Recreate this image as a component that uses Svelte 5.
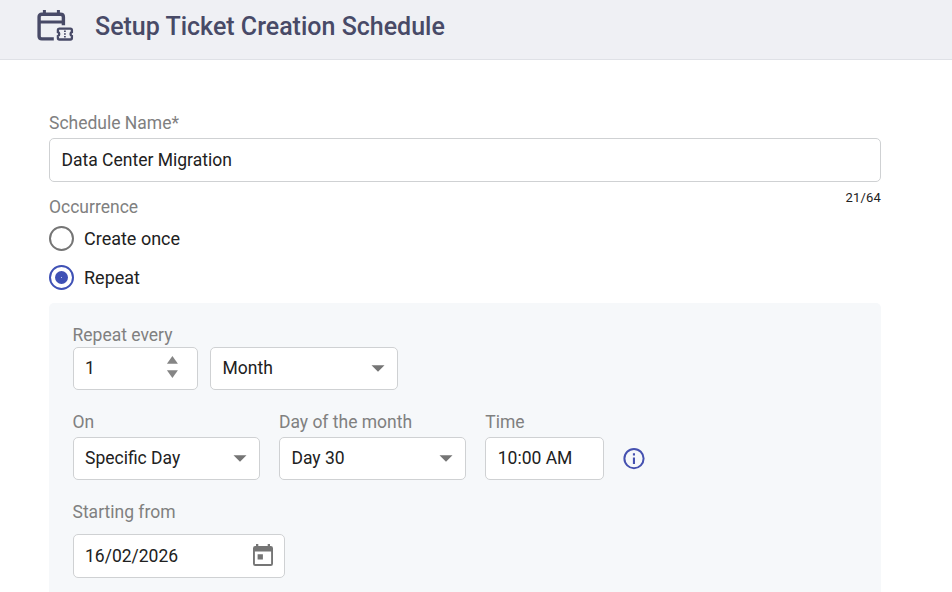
<script lang="ts">
	type Occurrence = "once" | "repeat";

	const NAME_MAX = 64;
	const OPTIONS: { id: Occurrence; label: string }[] = [
		{ id: "once", label: "Create once" },
		{ id: "repeat", label: "Repeat" },
	];

	let name = $state("Data Center Migration");
	let occurrence = $state<Occurrence>("repeat");
	let interval = $state(1);

	const step = (by: number) => (interval = Math.max(1, interval + by));
</script>

{#snippet select(value: string)}
	<button class="field select">
		<span>{value}</span>
		<svg class="caret" width="14" height="7" viewBox="0 0 14 7"><path d="M0.5 0.3h13L7 6.8z" /></svg>
	</button>
{/snippet}

<header>
	<svg class="logo" width="38" height="32" viewBox="0 0 38 32" fill="none" stroke="currentColor">
		<path d="M8.4 0v5M22.4 0v5" stroke-width="3" />
		<path d="M17.8 28.9H5.8Q3.1 28.9 3.1 26.3V6.8Q3.1 4.3 5.8 4.3H24.4Q27.4 4.3 27.4 7V15.3" stroke-width="3.4" />
		<path d="M3 12H27.4" stroke-width="3" />
		<path d="M23 18.6H34.4Q35.9 18.6 35.9 20.1V22.2A2 2 0 0 0 35.9 26V28Q35.9 29.5 34.4 29.5H23.4Q21.9 29.5 21.9 28V26A2 2 0 0 0 21.9 22.2V20.1Q21.9 18.6 23.4 18.6" stroke-width="2.3" />
		<path d="M28.9 20.4v7.2" stroke-width="1.8" stroke-dasharray="1.7 1.05" />
	</svg>
	<h1>Setup Ticket Creation Schedule</h1>
</header>

<main>
	<div class="label">Schedule Name*</div>
	<div class="field name" role="textbox" tabindex="0" contenteditable="true" bind:textContent={name}></div>

	<div class="under">
		<div class="label">Occurrence</div>
		<div class="count">{name.length}/{NAME_MAX}</div>
	</div>

	<div class="options" role="radiogroup">
		{#each OPTIONS as o (o.id)}
			<button class="option" role="radio" aria-checked={occurrence === o.id} onclick={() => (occurrence = o.id)}>
				<span class="dot" class:on={occurrence === o.id}></span>
				{o.label}
			</button>
		{/each}
	</div>

	{#if occurrence === "repeat"}
		<section>
			<div class="label">Repeat every</div>
			<div class="row every">
				<div class="field interval">
					<span>{interval}</span>
					<div class="steps">
						<button aria-label="Increase" onclick={() => step(1)}>
							<svg width="12" height="8" viewBox="0 0 12 8"><path d="M6.4 0L11.9 7.8H0.9z" /></svg>
						</button>
						<button aria-label="Decrease" onclick={() => step(-1)}>
							<svg width="12" height="8" viewBox="0 0 12 8"><path d="M6.4 8L11.9 0.2H0.9z" /></svg>
						</button>
					</div>
				</div>
				<div class="month">{@render select("Month")}</div>
			</div>

			<div class="row when">
				<div class="col">
					<div class="label">On</div>
					{@render select("Specific Day")}
				</div>
				<div class="col">
					<div class="label">Day of the month</div>
					{@render select("Day 30")}
				</div>
				<div class="col time">
					<div class="label">Time</div>
					<div class="field">10:00 AM</div>
				</div>
				<svg class="info" width="22" height="22" viewBox="0 0 22 22">
					<circle cx="11" cy="10.6" r="9.6" fill="none" stroke="currentColor" stroke-width="2" />
					<path d="M9.9 5.3h2.1v2.1h-2.1zM9.9 9.4h2.1v6.5h-2.1z" fill="currentColor" />
				</svg>
			</div>

			<div class="start">
				<div class="label">Starting from</div>
				<div class="field date">
					<span>16/02/2026</span>
					<svg width="20" height="22" viewBox="0 0 20 22">
						<path fill-rule="evenodd" d="M3 0h2.3v2.1h9.4V0H17v2.1h.8A2.2 2.2 0 0 1 20 4.3v15.4a2.2 2.2 0 0 1-2.2 2.2H2.2A2.2 2.2 0 0 1 0 19.7V4.3a2.2 2.2 0 0 1 2.2-2.2H3zM1.9 7.6v12.3h16.2V7.6zM4.6 10.2h5.3v5.2H4.6z" />
					</svg>
				</div>
			</div>
		</section>
	{/if}
</main>

<style>
	:global(body) {
		margin: 0;
		background: #fff;
		color: #212121;
		font-family: Roboto, "Liberation Sans", sans-serif;
		font-size: 18px;
	}
	header {
		display: flex;
		align-items: flex-start;
		box-sizing: border-box;
		height: 60px;
		padding: 10px 0 0 36px;
		background: #eff0f4;
		border-bottom: 1px solid #dfe1e6;
		color: #484a67;
	}
	h1 {
		margin: 1px 0 0 21px;
		font-size: 25px;
		font-weight: 500;
		line-height: 32px;
	}
	main {
		width: 832px;
		padding: 53px 0 0 49px;
	}
	button {
		font: inherit;
		color: inherit;
		background: none;
		border: 0;
		padding: 0;
		text-align: left;
	}
	.label {
		font-size: 17.5px;
		line-height: 20px;
		color: #808080;
	}
	.field {
		display: flex;
		align-items: center;
		box-sizing: border-box;
		width: 100%;
		height: 43px;
		padding: 0 12px 1px 11.5px;
		background: #fff;
		border: 1px solid #cfd1d3;
		border-radius: 5px;
		font-size: 17.5px;
		white-space: nowrap;
	}
	.name {
		height: 44px;
		margin-top: 5px;
	}
	.under {
		display: flex;
		justify-content: space-between;
		padding-top: 15px;
	}
	.count {
		margin-top: -7px;
		font-size: 13px;
		line-height: 16px;
		letter-spacing: 0.2px;
	}
	.options {
		display: flex;
		flex-direction: column;
		align-items: flex-start;
		gap: 14px;
		padding: 9px 0 13px;
	}
	.option {
		display: flex;
		align-items: center;
		gap: 10px;
		height: 25px;
	}
	.dot {
		display: flex;
		align-items: center;
		justify-content: center;
		box-sizing: border-box;
		width: 25px;
		height: 25px;
		border: 2px solid #757575;
		border-radius: 50%;
	}
	.dot.on {
		border-color: #3f51b5;
	}
	.dot.on::after {
		content: "";
		width: 13px;
		height: 13px;
		border-radius: 50%;
		background: radial-gradient(circle, #bcc3ee 0.5px, #3f51b5 1px);
	}
	section {
		box-sizing: border-box;
		height: 289px;
		padding: 22px 24px 0 23.5px;
		border-radius: 5px 5px 0 0;
		background: #f6f8fa;
	}
	.row {
		display: flex;
	}
	.every {
		gap: 12.5px;
		margin-top: 2px;
	}
	section .field {
		padding-bottom: 2px;
	}
	.interval {
		width: 125px;
		justify-content: space-between;
		padding-right: 18.5px;
	}
	.month {
		width: 187.5px;
	}
	.steps {
		display: flex;
		flex-direction: column;
		gap: 6px;
		margin-top: -1px;
		fill: #858585;
	}
	.steps button {
		display: flex;
	}
	.select {
		justify-content: space-between;
	}
	.caret {
		margin: 1px -0.6px 0 0;
		fill: #757575;
	}
	.when {
		gap: 19.4px;
		padding-top: 22px;
	}
	.col {
		width: 187px;
	}
	.col .label {
		margin-bottom: 5px;
	}
	.time {
		width: 119px;
	}
	.info {
		align-self: flex-end;
		margin: 0 0 10px -1px;
		color: #4551b0;
	}
	.start {
		padding-top: 22px;
	}
	.start .date {
		width: 212px;
		height: 44px;
		margin-top: 12px;
		padding-right: 11px;
		justify-content: space-between;
	}
	.date span {
		padding-top: 1px;
	}
	.date svg {
		fill: #757575;
	}
</style>
